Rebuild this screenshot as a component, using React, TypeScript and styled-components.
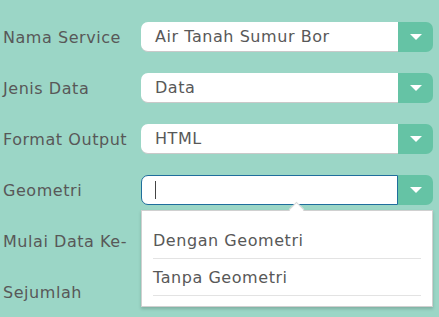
import React from "react";
import styled, { createGlobalStyle } from "styled-components";

const Global = createGlobalStyle`
  html, body { margin: 0; padding: 0; }
  body {
    background: #9bd6c6;
    font-family: "DejaVu Sans", Verdana, sans-serif;
    letter-spacing: 0.55px;
    width: 439px;
    height: 317px;
    overflow: hidden;
  }
`;

const Form = styled.div`
  display: flex;
  flex-direction: column;
  gap: 21px;
  padding: 22px 6px 0 3px;
`;

const Row = styled.div<{ $top?: boolean }>`
  display: grid;
  grid-template-columns: 138px 1fr;
  align-items: center;
  height: 30px;
  position: relative;
  z-index: ${(p) => (p.$top ? 5 : "auto")};
`;

const Label = styled.div`
  font-size: 16px;
  color: #585858;
`;

const Field = styled.div`
  position: relative;
  display: flex;
  height: 30px;
`;

const Box = styled.div<{ $focus?: boolean; $width?: number }>`
  flex: ${(p) => (p.$width ? "0 0 auto" : "1")};
  width: ${(p) => (p.$width ? `${p.$width}px` : "auto")};
  box-sizing: border-box;
  background: #fff;
  border-radius: 7px 0 0 7px;
  border: ${(p) => (p.$focus ? "1.5px solid #1f6e9c" : "none")};
  border-bottom: ${(p) => (p.$focus ? "1.5px solid #1f6e9c" : "1px solid #c9c9c9")};
  display: flex;
  align-items: center;
  padding-left: 14px;
  font-size: 16px;
  color: #585858;
`;

const Plain = styled(Box)`
  border-radius: 7px;
`;

const Btn = styled.div`
  width: 35px;
  background: #65c3a5;
  border-radius: 0 7px 7px 0;
  display: flex;
  align-items: center;
  justify-content: center;
`;

const Arrow = styled.div`
  width: 0;
  height: 0;
  border-left: 6px solid transparent;
  border-right: 6px solid transparent;
  border-top: 6px solid #fff;
`;

const Cursor = styled.div`
  width: 1px;
  height: 18px;
  background: #444;
  margin-left: -1px;
`;

const Menu = styled.div`
  position: absolute;
  left: 0;
  right: 0;
  top: 35px;
  background: #fff;
  border: 1px solid #d0d0d0;
  box-shadow: 0 2px 3px rgba(0, 0, 0, 0.18);
  padding: 11px 11px 10px 11px;
  z-index: 5;
`;

const Caret = styled.div`
  position: absolute;
  top: -7px;
  left: 149px;
  width: 10px;
  height: 10px;
  background: #fff;
  border-left: 1px solid #d8d8d8;
  border-top: 1px solid #d8d8d8;
  transform: rotate(45deg);
`;

const Item = styled.div`
  font-size: 16px;
  color: #585858;
  height: 36px;
  display: flex;
  align-items: center;
  border-bottom: 1px solid #e3e3e3;
`;

const Select = ({ value, focus, open }: { value?: string; focus?: boolean; open?: boolean }) => (
  <Field>
    <Box $focus={focus}>{focus ? <Cursor /> : value}</Box>
    <Btn>
      <Arrow />
    </Btn>
    {open && (
      <Menu>
        <Caret />
        <Item>Dengan Geometri</Item>
        <Item>Tanpa Geometri</Item>
      </Menu>
    )}
  </Field>
);

export default function App() {
  return (
    <>
      <Global />
      <Form>
        <Row>
          <Label>Nama Service</Label>
          <Select value="Air Tanah Sumur Bor" />
        </Row>
        <Row>
          <Label>Jenis Data</Label>
          <Select value="Data" />
        </Row>
        <Row>
          <Label>Format Output</Label>
          <Select value="HTML" />
        </Row>
        <Row $top>
          <Label>Geometri</Label>
          <Select focus open />
        </Row>
        <Row>
          <Label>Mulai Data Ke-</Label>
          <Field>
            <Plain $width={121} />
          </Field>
        </Row>
        <Row>
          <Label>Sejumlah</Label>
          <Field>
            <Plain $width={121} />
          </Field>
        </Row>
      </Form>
    </>
  );
}
